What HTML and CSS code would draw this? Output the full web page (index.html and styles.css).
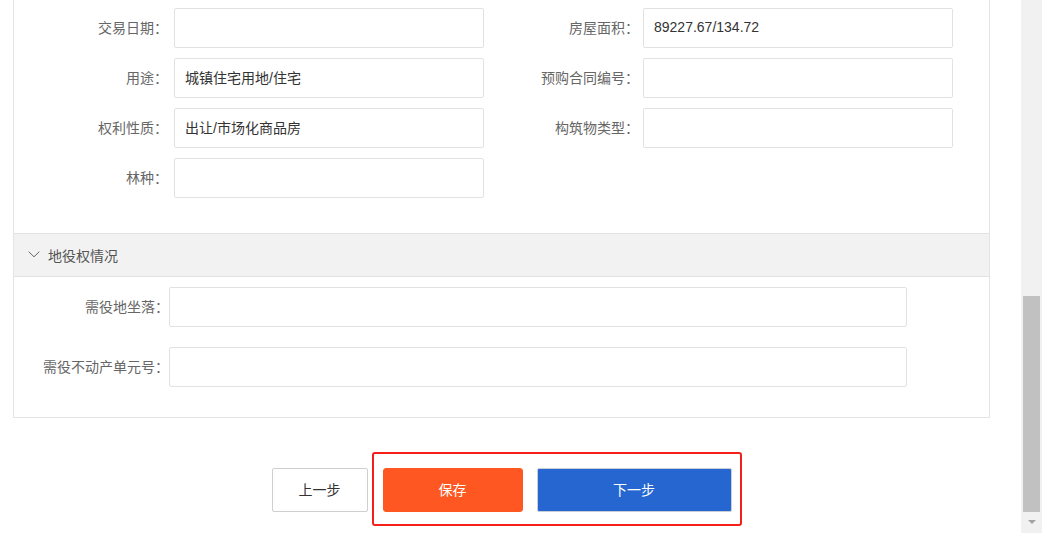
FILE: index.html
```html
<!DOCTYPE html>
<html lang="zh-CN">
  <head>
    <meta charset="UTF-8" />
    <meta name="viewport" content="width=device-width, initial-scale=1.0" />
    <title>不动产登记</title>
    <link rel="stylesheet" href="styles.css">
  </head>
  <body>
    <div class="page">
      <main class="content">
        <div class="card">
          <!-- 基本信息 -->
          <div class="form-grid">
            <label class="field-label">交易日期：</label>
            <input class="field-input" type="text" value="">
            <label class="field-label field-label-right">房屋面积：</label>
            <input class="field-input" type="text" value="89227.67/134.72">

            <label class="field-label">用途：</label>
            <input class="field-input" type="text" value="城镇住宅用地/住宅">
            <label class="field-label field-label-right">预购合同编号：</label>
            <input class="field-input" type="text" value="">

            <label class="field-label">权利性质：</label>
            <input class="field-input" type="text" value="出让/市场化商品房">
            <label class="field-label field-label-right">构筑物类型：</label>
            <input class="field-input" type="text" value="">

            <label class="field-label">林种：</label>
            <input class="field-input" type="text" value="">
          </div>

          <!-- 地役权情况 -->
          <div class="section-head">
            <svg class="section-arrow" width="12" height="7" viewBox="0 0 12 7">
              <path d="M0.7 0.7 L6 5.8 L11.3 0.7" fill="none" stroke="#666" stroke-width="1"/>
            </svg>
            <span>地役权情况</span>
          </div>
          <div class="form-list">
            <div class="form-row">
              <label class="field-label field-label-wide">需役地坐落：</label>
              <input class="field-input field-input-wide" type="text" value="">
            </div>
            <div class="form-row">
              <label class="field-label field-label-wide">需役不动产单元号：</label>
              <input class="field-input field-input-wide" type="text" value="">
            </div>
          </div>
        </div>

        <div class="actions">
          <button class="btn btn-default">上一步</button>
          <div class="highlight">
            <button class="btn btn-save">保存</button>
            <button class="btn btn-next">下一步</button>
          </div>
        </div>
      </main>

      <div class="scrollbar">
        <div class="scroll-thumb"></div>
        <div class="scroll-arrow"></div>
      </div>
    </div>
  </body>
</html>
```

FILE: styles.css
```css
html, body {
  margin: 0;
  padding: 0;
  background: #fff;
  overflow: hidden;
}

body {
  font-family: "Liberation Sans", "Noto Sans CJK SC", sans-serif;
  font-size: 14px;
  color: #333;
}

.page {
  display: flex;
  width: 1048px;
  height: 537px;
}

.content {
  flex: 0 0 1021px;
}

.card {
  margin-left: 13px;
  width: 977px;
  box-sizing: border-box;
  border: 1px solid #e4e4e4;
  border-top: none;
  background: #fff;
}

/* 基本信息 */
.form-grid {
  display: grid;
  grid-template-columns: 160px 310px 159px 310px;
  grid-auto-rows: 40px;
  row-gap: 10px;
  padding: 8px 0 35px;
}

.field-label {
  display: flex;
  align-items: center;
  justify-content: flex-end;
  padding: 0 6px 3px 0;
  color: #666;
  white-space: nowrap;
}

.field-label-right {
  padding-right: 4px;
}

.field-input {
  box-sizing: border-box;
  height: 40px;
  width: 100%;
  margin: 0;
  padding: 0 10px 2px;
  border: 1px solid #e2e2e2;
  border-radius: 2px;
  background: #fff;
  font-family: inherit;
  font-size: 14px;
  color: #333;
  outline: none;
}

/* 地役权情况 */
.section-head {
  display: flex;
  align-items: center;
  gap: 8px;
  height: 44px;
  box-sizing: border-box;
  padding: 0 0 1px 14px;
  background: #f2f2f2;
  border-top: 1px solid #e2e2e2;
  border-bottom: 1px solid #e2e2e2;
  color: #555;
}

.form-list {
  display: flex;
  flex-direction: column;
  gap: 20px;
  padding: 10px 0 30px;
}

.form-row {
  display: flex;
  height: 40px;
}

.field-label-wide {
  width: 155px;
  padding-right: 0;
}

.field-input-wide {
  width: 738px;
}

/* 按钮 */
.actions {
  display: flex;
  justify-content: center;
  align-items: center;
  gap: 15px;
  margin: 50px 0 0 13px;
  width: 977px;
}

.highlight {
  position: relative;
  display: flex;
  gap: 14px;
}

.highlight::after {
  content: "";
  position: absolute;
  top: -16px;
  left: -11px;
  right: -10px;
  bottom: -14px;
  border: 2px solid #f5201a;
  border-radius: 3px;
  pointer-events: none;
}

.btn {
  height: 44px;
  margin: 0;
  padding: 0 0 2px;
  border-radius: 2px;
  font-family: inherit;
  font-size: 14px;
  cursor: pointer;
}

.btn-default {
  width: 96px;
  background: #fff;
  border: 1px solid #cfcfcf;
  color: #333;
}

.btn-save {
  width: 140px;
  background: #ff5722;
  border: 1px solid #ff5722;
  border-radius: 3px;
  color: #fff;
}

.btn-next {
  width: 195px;
  background: #2566d1;
  border: 1px solid #c9cdd6;
  color: #fff;
}

/* 滚动条 */
.scrollbar {
  flex: 0 0 21px;
  height: 533px;
  background: #f1f1f1;
  display: flex;
  flex-direction: column;
  align-items: center;
}

.scroll-thumb {
  width: 17px;
  height: 216px;
  margin-top: 296px;
  background: #c1c1c1;
}

.scroll-arrow {
  margin-top: 8px;
  width: 0;
  height: 0;
  border-left: 4px solid transparent;
  border-right: 4px solid transparent;
  border-top: 4px solid #a3a3a3;
}
```
